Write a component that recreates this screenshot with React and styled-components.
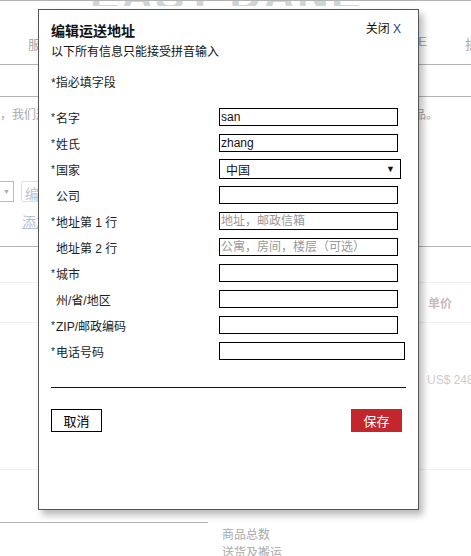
import React from "react";
import styled, {createGlobalStyle} from "styled-components";

const GlobalStyle = createGlobalStyle`
  html, body {
    margin: 0;
    padding: 0;
    background: #fff;
  }
  body {
    font-family: "Liberation Sans", "Noto Sans CJK SC", sans-serif;
    font-size: 12px;
  }
`

const FONT = `"Liberation Sans", "Noto Sans CJK SC", sans-serif`;

// ---------- faded page behind the dialog ----------
const Page = styled.div`
  position: relative;
  width: 471px;
  height: 556px;
  overflow: hidden;
  border-top: 1px solid #b4b4b4;
  box-sizing: border-box;
  color: #aaa;
`

const Logo = styled.div`
  height: 5px;
  overflow: hidden;
  padding-left: 90px;
  font-size: 44px;
  font-weight: bold;
  line-height: 1;
  letter-spacing: 2px;
  color: #ccd6d8;
  white-space: nowrap;
  span {
    display: block;
    margin-top: -28px;
  }
`

const Nav = styled.div`
  display: flex;
  justify-content: space-between;
  align-items: center;
  height: 59px;
  padding: 16px 0 0 28px;
  border-bottom: 1px solid #b4b4b4;
  box-sizing: border-box;
  font-size: 13px;
  color: #aaa;
  .right {
    display: flex;
    gap: 38px;
    margin-right: -7px;
  }
`

const SubBar = styled.div`
  height: 31px;
  border-bottom: 1px solid #b4b4b4;
`

const Notice = styled.div`
  display: flex;
  justify-content: space-between;
  padding-top: 8px;
  height: 76px;
  font-size: 12px;
  color: #aaa;
  .right { margin-right: 33px; }
`

const ActionRow = styled.div`
  display: flex;
  gap: 7px;
  align-items: flex-start;
  height: 65px;
`

const FakeSelect = styled.div`
  width: 14px;
  height: 21px;
  border: 1px solid #bbb;
  border-left: none;
  box-sizing: border-box;
  font-size: 7px;
  color: #aaa;
  display: flex;
  align-items: center;
  justify-content: center;
`

const LinkCol = styled.div`
  display: flex;
  flex-direction: column;
  gap: 9px;
`

const EditLink = styled.div`
  height: 21px;
  box-sizing: border-box;
  padding: 1px 3px;
  border: 1px solid #d6e2f4;
  border-radius: 2px;
  color: #b9c5dc;
  font-size: 14px;
`

const AddLink = styled.div`
  color: #b8c1d4;
  font-size: 14px;
  text-decoration: underline;
  padding-left: 1px;
`

const Rule = styled.div`
  border-bottom: 1px solid ${p => p.$faint ? "#f2f2f2" : "#b4b4b4"};
  height: ${p => p.$h}px;
`

const TableHead = styled.div`
  display: flex;
  align-items: center;
  height: 39px;
  padding-left: 428px;
  border-bottom: 1px solid #f2f2f2;
  font-size: 12px;
  font-weight: bold;
  color: #cbb8bd;
  white-space: nowrap;
`

const Price = styled.div`
  padding: 50px 0 0 427px;
  height: 147px;
  box-sizing: border-box;
  font-size: 12px;
  color: #d4c8cc;
  white-space: nowrap;
  border-bottom: 1px solid #f2f2f2;
`

const Summary = styled.div`
  display: grid;
  grid-template-columns: 208px 1fr;
  margin-top: 52px;
  .line {
    border-top: 1px solid #b4b4b4;
  }
  .totals {
    padding: 4px 0 0 14px;
    font-size: 12px;
    color: #aaa;
    line-height: 18px;
  }
`

// ---------- the dialog ----------
const Dialog = styled.div`
  position: absolute;
  left: 38px;
  top: 8px;
  width: 381px;
  height: 501px;
  box-sizing: border-box;
  background: #fff;
  border: 1px solid #555;
  box-shadow: 4px 5px 7px rgba(0, 0, 0, 0.28);
  padding: 10px 12px 0 12px;
  font-family: ${FONT};
  color: #222;
`

const Head = styled.div`
  display: flex;
  justify-content: space-between;
  align-items: flex-start;
`

const Title = styled.div`
  font-size: 14px;
  font-weight: bold;
  color: #111;
  line-height: 22px;
`

const Close = styled.div`
  font-size: 12px;
  color: #111;
  line-height: 16px;
  margin-right: 5px;
  margin-top: 1px;
  span {
    color: #1d3f7a;
  }
`

const Sub = styled.div`
  font-size: 12px;
  line-height: 16px;
  margin-top: 2px;
  color: #111;
`

const Required = styled.div`
  font-size: 12px;
  line-height: 16px;
  margin: 15px 0 13px;
  color: #222;
`

const Form = styled.div`
  display: grid;
  grid-template-columns: 168px 1fr;
  grid-auto-rows: 26px;
  align-items: center;
`

const Label = styled.div`
  font-size: 12px;
  color: #222;
  display: flex;
  align-items: center;
  white-space: nowrap;
  .star {
    display: inline-block;
    width: 5px;
    font-size: 10px;
    visibility: ${p => p.$req ? "visible" : "hidden"};
  }
`

const Field = styled.input`
  box-sizing: border-box;
  width: ${p => p.$w || 179}px;
  height: 18px;
  border: 1px solid #000;
  padding: 0 1px;
  font-family: ${FONT};
  font-size: 12px;
  color: #111;
  outline: none;
  &::placeholder {
    color: #999;
  }
`

const Select = styled.div`
  box-sizing: border-box;
  width: 182px;
  height: 20px;
  border: 1px solid #000;
  padding: 0 5px 0 6px;
  display: flex;
  align-items: center;
  justify-content: space-between;
  font-size: 12px;
  color: #111;
  .arrow {
    font-size: 9px;
  }
`

const Divider = styled.div`
  border-top: 1px solid #111;
  margin-top: 23px;
`

const Buttons = styled.div`
  display: flex;
  justify-content: space-between;
  margin-top: 21px;
  padding-right: 4px;
`

const Button = styled.button`
  width: 51px;
  height: 23px;
  box-sizing: border-box;
  font-family: ${FONT};
  font-size: 13px;
  border: 1px solid ${p => p.$primary ? "#c4262e" : "#000"};
  background: ${p => p.$primary ? "#c4262e" : "#fff"};
  color: ${p => p.$primary ? "#fff" : "#000"};
  padding: 0;
  cursor: pointer;
`

const fields = [
    {label: "名字", req: true, value: "san"},
    {label: "姓氏", req: true, value: "zhang"},
    {label: "国家", req: true, select: "中国"},
    {label: "公司"},
    {label: "地址第 1 行", req: true, placeholder: "地址，邮政信箱"},
    {label: "地址第 2 行", placeholder: "公寓，房间，楼层（可选）"},
    {label: "城市", req: true},
    {label: "州/省/地区"},
    {label: "ZIP/邮政编码", req: true},
    {label: "电话号码", req: true, width: 186},
];

const App = () => {
    return (
        <>
            <GlobalStyle/>
            <Page>
                <Logo><span>EAST DANE</span></Logo>
                <Nav>
                    <span>服</span>
                    <div className="right"><span>E</span><span>折</span></div>
                </Nav>
                <SubBar/>
                <Notice>
                    <span>，我们运送全球</span>
                    <span className="right">品。</span>
                </Notice>
                <ActionRow>
                    <FakeSelect>▼</FakeSelect>
                    <LinkCol>
                        <EditLink>编辑</EditLink>
                        <AddLink>添加</AddLink>
                    </LinkCol>
                </ActionRow>
                <Rule $h={0}/>
                <Rule $h={35} $faint/>
                <TableHead>单价</TableHead>
                <Price>US$ 248</Price>
                <Summary>
                    <div className="line"/>
                    <div className="totals">商品总数<br/>送货及搬运</div>
                </Summary>

                <Dialog>
                    <Head>
                        <Title>编辑运送地址</Title>
                        <Close>关闭 <span>X</span></Close>
                    </Head>
                    <Sub>以下所有信息只能接受拼音输入</Sub>
                    <Required>*指必填字段</Required>
                    <Form>
                        {fields.map(f => (
                            <React.Fragment key={f.label}>
                                <Label $req={f.req}><span className="star">*</span>{f.label}</Label>
                                {f.select
                                    ? <Select><span>{f.select}</span><span className="arrow">▼</span></Select>
                                    : <Field $w={f.width} defaultValue={f.value} placeholder={f.placeholder}/>}
                            </React.Fragment>
                        ))}
                    </Form>
                    <Divider/>
                    <Buttons>
                        <Button>取消</Button>
                        <Button $primary>保存</Button>
                    </Buttons>
                </Dialog>
            </Page>
        </>
    )
}

export default App
